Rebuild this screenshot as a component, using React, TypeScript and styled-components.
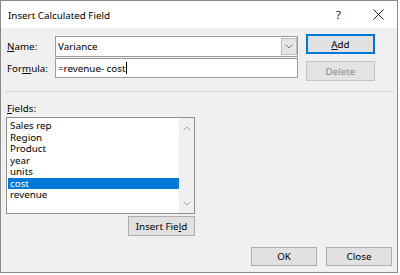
import React from "react";
import styled, { createGlobalStyle } from "styled-components";

const GlobalStyle = createGlobalStyle`
  html, body { margin: 0; padding: 0; background: #ffffff; }
  * { box-sizing: border-box; }
`;

const Dialog = styled.div`
  width: 398px;
  height: 273px;
  border: 1px solid #8a8a8a;
  background: #f0f0f0;
  display: flex;
  flex-direction: column;
  font-family: "Noto Sans", "Liberation Sans", Arial, sans-serif;
  font-size: 9.8px;
  color: #000;
`;

const TitleBar = styled.div`
  height: 27px;
  background: #ffffff;
  display: flex;
  align-items: center;
  padding-left: 7px;
`;

const Title = styled.div`
  flex: 1;
  padding-top: 2px;
`;

const CaptionButton = styled.div<{ $w: number }>`
  width: ${(p) => p.$w}px;
  height: 27px;
  display: flex;
  align-items: center;
  justify-content: center;
  font-size: 11px;
  color: #111;
`;

const Body = styled.div`
  display: flex;
  flex-direction: column;
  flex: 1;
`;

const TopSection = styled.div`
  display: flex;
  align-items: flex-start;
  padding-left: 6px;
`;

const FormGrid = styled.div`
  display: grid;
  grid-template-columns: 48px 243px;
  grid-template-rows: 21px 20px;
  row-gap: 1px;
  margin-top: 8px;
`;

const Label = styled.label`
  display: flex;
  align-items: center;
  white-space: nowrap;
`;

const Field = styled.div`
  display: flex;
  align-items: center;
  background: #ffffff;
  border: 1px solid #9c9c9c;
  padding-left: 2px;
  white-space: nowrap;
`;

const FieldText = styled.span`
  flex: 1;
  display: flex;
  align-items: center;
`;

const DropButton = styled.div`
  width: 16px;
  align-self: stretch;
  margin: 1px 0 1px 0;
  background: #e5e5e5;
  border: 1px solid #bcbcbc;
  display: flex;
  align-items: center;
  justify-content: center;
`;

const Caret = styled.span`
  display: inline-block;
  width: 1px;
  height: 12px;
  background: #000;
  margin-left: 1px;
`;

const ButtonColumn = styled.div`
  display: flex;
  flex-direction: column;
  gap: 7px;
  margin-left: 8px;
  margin-top: 6px;
`;

const Button = styled.div<{ $w: number; $h?: number; $primary?: boolean; $disabled?: boolean }>`
  width: ${(p) => p.$w}px;
  height: ${(p) => p.$h ?? 20}px;
  display: flex;
  align-items: center;
  justify-content: center;
  background: ${(p) => (p.$disabled ? "#e3e3e3" : "#e1e1e1")};
  border: ${(p) =>
    p.$primary ? "2px solid #0078d7" : p.$disabled ? "1px solid #c4c4c4" : "1px solid #adadad"};
  color: ${(p) => (p.$disabled ? "#8a8a8a" : "#000")};
  white-space: nowrap;
`;

const Separator = styled.div`
  height: 1px;
  background: #d7d7d7;
  margin: 10px 3px 0 4px;
`;

const FieldsLabel = styled.div`
  height: 12px;
  line-height: 12px;
  margin: 11px 0 2px 6px;
`;

const FieldsColumn = styled.div`
  width: 189px;
  margin-left: 5px;
  display: flex;
  flex-direction: column;
  align-items: flex-end;
  gap: 2px;
`;

const ListBox = styled.div`
  width: 189px;
  height: 97px;
  background: #ffffff;
  border: 1px solid #8e8f94;
  display: flex;
`;

const ListItems = styled.div`
  flex: 1;
  padding-top: 2px;
  display: flex;
  flex-direction: column;
`;

const ListItem = styled.div<{ $selected?: boolean }>`
  height: 11.5px;
  line-height: 11.5px;
  margin-left: 1px;
  padding-left: 2px;
  background: ${(p) => (p.$selected ? "#0078d7" : "transparent")};
  color: ${(p) => (p.$selected ? "#ffffff" : "#000")};
`;

const ScrollBar = styled.div`
  width: 15px;
  background: #f0f0f0;
  display: flex;
  flex-direction: column;
  justify-content: space-between;
  align-items: center;
  padding: 8px 0 7px;
`;

const Footer = styled.div`
  display: flex;
  justify-content: flex-end;
  gap: 9px;
  padding-right: 5px;
  margin-top: 11px;
`;

const Chevron = ({ up, color = "#a6a6a6" }: { up?: boolean; color?: string }) => (
  <svg width="8" height="5" viewBox="0 0 8 5">
    <polyline
      points={up ? "0.5,4.5 4,1 7.5,4.5" : "0.5,0.5 4,4 7.5,0.5"}
      fill="none"
      stroke={color}
      strokeWidth="1"
    />
  </svg>
);

const CloseIcon = () => (
  <svg width="11" height="11" viewBox="0 0 11 11">
    <path d="M0.5 0.5 L10.5 10.5 M10.5 0.5 L0.5 10.5" stroke="#222" strokeWidth="1" fill="none" />
  </svg>
);

const fields = ["Sales rep", "Region", "Product", "year", "units", "cost", "revenue"];

export default function App() {
  return (
    <>
      <GlobalStyle />
      <Dialog>
        <TitleBar>
          <Title>Insert Calculated Field</Title>
          <CaptionButton $w={41}>?</CaptionButton>
          <CaptionButton $w={38}>
            <CloseIcon />
          </CaptionButton>
        </TitleBar>
        <Body>
          <TopSection>
            <FormGrid>
              <Label>
                <u>N</u>ame:
              </Label>
              <Field>
                <FieldText>Variance</FieldText>
                <DropButton>
                  <Chevron color="#7a7a7a" />
                </DropButton>
              </Field>
              <Label>
                For<u>m</u>ula:
              </Label>
              <Field>
                <FieldText>
                  =revenue- cost
                  <Caret />
                </FieldText>
              </Field>
            </FormGrid>
            <ButtonColumn>
              <Button $w={69} $primary>
                <u>A</u>dd
              </Button>
              <Button $w={69} $disabled>
                Delete
              </Button>
            </ButtonColumn>
          </TopSection>
          <Separator />
          <FieldsLabel>
            <u>F</u>ields:
          </FieldsLabel>
          <FieldsColumn>
            <ListBox>
              <ListItems>
                {fields.map((f) => (
                  <ListItem key={f} $selected={f === "cost"}>
                    {f}
                  </ListItem>
                ))}
              </ListItems>
              <ScrollBar>
                <Chevron up />
                <Chevron />
              </ScrollBar>
            </ListBox>
            <Button $w={67}>
              Insert Fie<u>l</u>d
            </Button>
          </FieldsColumn>
          <Footer>
            <Button $w={66} $h={19}>
              OK
            </Button>
            <Button $w={66} $h={19}>
              Close
            </Button>
          </Footer>
        </Body>
      </Dialog>
    </>
  );
}
